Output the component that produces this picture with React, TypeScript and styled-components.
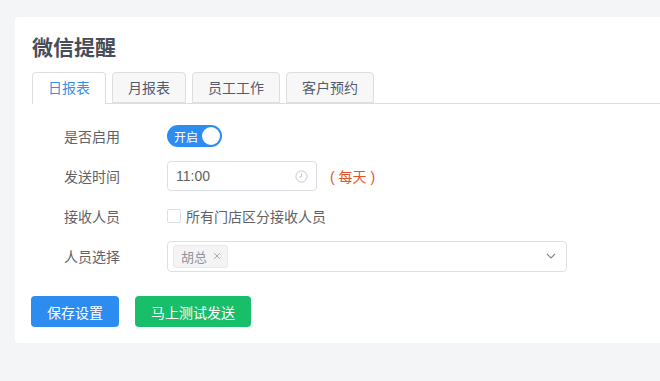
import styled, { createGlobalStyle } from 'styled-components';

const GlobalStyle = createGlobalStyle`
  html, body {
    margin: 0;
    padding: 0;
    background: #f4f5f7;
    font-family: "Liberation Sans", "Noto Sans CJK SC", sans-serif;
    overflow: hidden;
  }
  * { box-sizing: border-box; }
`;

const Page = styled.div`
  padding: 17px 0 0 15px;
  height: 381px;
`;

const Card = styled.div`
  background: #fff;
  border-radius: 4px 0 0 4px;
  padding: 16px 0 16px 17px;
`;

const Title = styled.div`
  font-size: 21px;
  font-weight: bold;
  color: #484d5a;
  line-height: 30px;
  height: 30px;
  margin: 0 0 9px;
`;

const TabBar = styled.div`
  display: flex;
  gap: 6px;
  border-bottom: 1px solid #dcdee2;
  height: 32px;
`;

const Tab = styled.div<{ $active?: boolean }>`
  height: ${p => (p.$active ? '32px' : '31px')};
  padding: 0 15px;
  line-height: 30px;
  font-size: 14px;
  color: ${p => (p.$active ? '#3a8ee6' : '#515a6e')};
  background: ${p => (p.$active ? '#fff' : '#f7f7f7')};
  border: 1px solid #dcdee2;
  border-bottom: ${p => (p.$active ? 'none' : '1px solid #dcdee2')};
  border-radius: 4px 4px 0 0;
`;

const Form = styled.div`
  display: flex;
  flex-direction: column;
  gap: 8px;
  margin-top: 16px;
`;

const Row = styled.div`
  display: flex;
  align-items: center;
  height: 32px;
`;

const Label = styled.div`
  width: 135px;
  padding-left: 32px;
  font-size: 14px;
  color: #606266;
`;

const Switch = styled.div`
  width: 55px;
  height: 22px;
  border-radius: 11px;
  background: #2d8cf0;
  display: flex;
  align-items: center;
  justify-content: space-between;
  padding: 0 2px 0 7px;
  color: #fff;
  font-size: 12px;
`;

const Knob = styled.span`
  width: 18px;
  height: 18px;
  border-radius: 50%;
  background: #fff;
`;

const TimeInput = styled.div`
  width: 150px;
  height: 30px;
  border: 1px solid #dcdfe6;
  border-radius: 4px;
  display: flex;
  align-items: center;
  justify-content: space-between;
  padding: 0 8px 0 8px;
  font-size: 14px;
  color: #606266;
`;

const Hint = styled.span`
  margin-left: 13px;
  font-size: 14px;
  color: #e5532a;
  white-space: pre;
`;

const CheckBox = styled.span`
  width: 14px;
  height: 14px;
  border: 1px solid #dcdfe6;
  border-radius: 2px;
  margin-right: 5px;
`;

const CheckText = styled.span`
  font-size: 14px;
  color: #606266;
`;

const Select = styled.div`
  width: 400px;
  height: 31px;
  border: 1px solid #dcdfe6;
  border-radius: 4px;
  display: flex;
  align-items: center;
  justify-content: space-between;
  padding: 0 10px 0 5px;
`;

const Tag = styled.span`
  height: 23px;
  display: inline-flex;
  align-items: center;
  gap: 6px;
  padding: 0 6px 0 7px;
  background: #f4f4f5;
  border: 1px solid #e9e9eb;
  border-radius: 3px;
  font-size: 13px;
  color: #909399;
`;

const Actions = styled.div`
  display: flex;
  gap: 16px;
  margin-top: 24px;
  margin-left: -1px;
`;

const Button = styled.button<{ $color: string }>`
  height: 31px;
  padding: 0 16px;
  border: none;
  border-radius: 4px;
  background: ${p => p.$color};
  color: #fff;
  font-size: 14px;
  font-family: inherit;
`;

const ClockIcon = () => (
  <svg width="13" height="13" viewBox="0 0 14 14" fill="none" stroke="#c0c4cc" strokeWidth="1">
    <circle cx="7" cy="7" r="6" />
    <path d="M7 3.5V7.5H4.5" />
  </svg>
);

const CloseIcon = () => (
  <svg width="8" height="8" viewBox="0 0 8 8" stroke="#a8abb2" strokeWidth="1">
    <path d="M1 1L7 7M7 1L1 7" />
  </svg>
);

const ChevronIcon = () => (
  <svg width="10" height="6" viewBox="0 0 10 6" fill="none" stroke="#808389" strokeWidth="1.1">
    <path d="M1 1L5 5L9 1" />
  </svg>
);

export default function App() {
  const tabs = ['日报表', '月报表', '员工工作', '客户预约'];
  return (
    <Page>
      <GlobalStyle />
      <Card>
        <Title>微信提醒</Title>
        <TabBar>
          {tabs.map((t, i) => (
            <Tab key={t} $active={i === 0}>{t}</Tab>
          ))}
        </TabBar>
        <Form>
          <Row>
            <Label>是否启用</Label>
            <Switch>
              开启
              <Knob />
            </Switch>
          </Row>
          <Row>
            <Label>发送时间</Label>
            <TimeInput>
              11:00
              <ClockIcon />
            </TimeInput>
            <Hint>( 每天 )</Hint>
          </Row>
          <Row>
            <Label>接收人员</Label>
            <CheckBox />
            <CheckText>所有门店区分接收人员</CheckText>
          </Row>
          <Row>
            <Label>人员选择</Label>
            <Select>
              <Tag>
                胡总
                <CloseIcon />
              </Tag>
              <ChevronIcon />
            </Select>
          </Row>
        </Form>
        <Actions>
          <Button $color="#2d8cf0">保存设置</Button>
          <Button $color="#19be6b">马上测试发送</Button>
        </Actions>
      </Card>
    </Page>
  );
}
